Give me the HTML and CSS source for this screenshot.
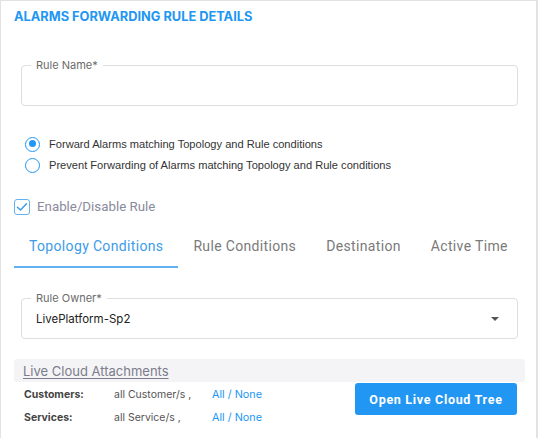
FILE: index.html
```html
<!DOCTYPE html>
<html>
<head>
<meta charset="utf-8">
<link rel="stylesheet" href="styles.css">
</head>
<body>
<div class="panel">
  <h1 class="title">ALARMS FORWARDING RULE DETAILS</h1>

  <div class="field field-name">
    <span class="field-label">Rule Name*</span>
  </div>

  <div class="radios">
    <label class="radio-row"><span class="radio checked"></span><span class="radio-text">Forward Alarms matching Topology and Rule conditions</span></label>
    <label class="radio-row"><span class="radio"></span><span class="radio-text">Prevent Forwarding of Alarms matching Topology and Rule conditions</span></label>
  </div>

  <div class="check-row">
    <span class="checkbox">
      <svg width="12" height="10" viewBox="0 0 12 10"><path d="M1.5 5.2 L4.5 8 L10.5 1.8" fill="none" stroke="#3d9be9" stroke-width="1.5" stroke-linecap="round" stroke-linejoin="round"/></svg>
    </span>
    <span class="check-text">Enable/Disable Rule</span>
  </div>

  <div class="tabs">
    <div class="tab active">Topology Conditions</div>
    <div class="tab">Rule Conditions</div>
    <div class="tab">Destination</div>
    <div class="tab">Active Time</div>
  </div>

  <div class="field field-owner">
    <span class="field-label">Rule Owner*</span>
    <span class="field-value">LivePlatform-Sp2</span>
    <span class="caret"></span>
  </div>

  <div class="attach-bar"><span class="attach-link">Live Cloud Attachments</span></div>

  <div class="attach-body">
    <div class="attach-rows">
      <div class="attach-row">
        <span class="attach-key">Customers:</span>
        <span class="attach-val">all Customer/s ,</span>
        <span class="attach-links"><span class="lnk">All</span> / <span class="lnk">None</span></span>
      </div>
      <div class="attach-row">
        <span class="attach-key">Services:</span>
        <span class="attach-val">all Service/s ,</span>
        <span class="attach-links"><span class="lnk">All</span> / <span class="lnk">None</span></span>
      </div>
    </div>
    <button class="btn">Open Live Cloud Tree</button>
  </div>
</div>
</body>
</html>
```

FILE: styles.css
```css
html, body {
  margin: 0;
  padding: 0;
  background: #fff;
}
body {
  width: 540px;
  height: 438px;
  overflow: hidden;
  font-family: Inter, "Liberation Sans", sans-serif;
}
.panel {
  width: 538px;
  height: 438px;
  box-sizing: border-box;
  border-top: 1px solid #e2e2e2;
  border-left: 1px solid #e2e2e2;
  border-right: 2px solid #e2e2e2;
  padding: 8px 0 0 13px;
  overflow: hidden;
}
.title {
  margin: 0;
  font-family: Inter, sans-serif;
  font-weight: 700;
  font-size: 12.8px;
  line-height: 16px;
  color: #2196f3;
  letter-spacing: 0;
}
.field {
  position: relative;
  box-sizing: border-box;
  width: 497px;
  height: 41px;
  margin-left: 7px;
  border: 1px solid #dedede;
  border-radius: 4px;
}
.field-name {
  margin-top: 40px;
}
.field-label {
  position: absolute;
  top: -8px;
  left: 9px;
  padding: 0 5px;
  background: #fff;
  font-size: 11px;
  line-height: 14px;
  color: #6b6b6b;
}
.radios {
  margin-top: 30px;
  margin-left: 11px;
  display: flex;
  flex-direction: column;
  gap: 5px;
}
.radio-row {
  display: flex;
  align-items: center;
  height: 16px;
}
.radio {
  box-sizing: border-box;
  width: 15px;
  height: 15px;
  border-radius: 50%;
  border: 1.5px solid #2196f3;
  margin-right: 9px;
  position: relative;
}
.radio.checked::after {
  content: "";
  position: absolute;
  left: 2.5px;
  top: 2.5px;
  width: 7px;
  height: 7px;
  border-radius: 50%;
  background: #2196f3;
}
.radio-text {
  font-family: "Liberation Sans", Arial, sans-serif;
  font-size: 11.1px;
  color: #333;
}
.check-row {
  margin-top: 25px;
  display: flex;
  align-items: center;
  height: 17px;
}
.checkbox {
  box-sizing: border-box;
  width: 16px;
  height: 16px;
  border: 1.5px solid #64b1ef;
  border-radius: 3px;
  display: flex;
  align-items: center;
  justify-content: center;
  margin-right: 7px;
}
.check-text {
  font-family: Roboto, sans-serif;
  font-size: 13.3px;
  color: #8a8a9c;
}
.tabs {
  margin-top: 11px;
  display: flex;
  height: 42px;
}
.tab {
  box-sizing: border-box;
  padding: 0 15px;
  display: flex;
  align-items: center;
  font-family: Roboto, sans-serif;
  font-size: 14px;
  letter-spacing: 0.34px;
  color: #7a7a7a;
  border-bottom: 2px solid transparent;
}
.tab.active {
  color: #3d9be9;
  border-bottom-color: #64b1ef;
}
.field-owner {
  margin-top: 30px;
  display: flex;
  align-items: center;
  padding-left: 14px;
}
.field-value {
  font-size: 11.5px;
  color: #222;
}
.caret {
  position: absolute;
  right: 18px;
  top: 18px;
  width: 0;
  height: 0;
  border-left: 4px solid transparent;
  border-right: 4px solid transparent;
  border-top: 4px solid #555;
}
.attach-bar {
  margin-top: 20px;
  width: 511px;
  height: 23px;
  box-sizing: border-box;
  background: #f4f4f6;
  border-radius: 3px;
  padding-left: 9px;
  display: flex;
  align-items: center;
}
.attach-link {
  font-size: 13px;
  color: #7c7c8c;
  text-decoration: underline;
  text-underline-offset: 2px;
}
.attach-body {
  display: flex;
  justify-content: space-between;
  width: 503px;
}
.attach-rows {
  padding-left: 10px;
  padding-top: 6px;
  display: flex;
  flex-direction: column;
  gap: 9px;
}
.attach-row {
  display: flex;
  align-items: center;
  font-size: 10.5px;
  line-height: 14px;
}
.attach-key {
  width: 90px;
  font-weight: 700;
  color: #444;
}
.attach-val {
  width: 98px;
  color: #555;
}
.attach-links {
  color: #2196f3;
  font-size: 10.8px;
}
.btn {
  margin-top: 1px;
  width: 162px;
  height: 32px;
  border: none;
  border-radius: 3px;
  background: #2196f3;
  color: #fff;
  font-family: Roboto, sans-serif;
  font-weight: 700;
  font-size: 12.5px;
  letter-spacing: 0.7px;
  padding: 0;
}
```
